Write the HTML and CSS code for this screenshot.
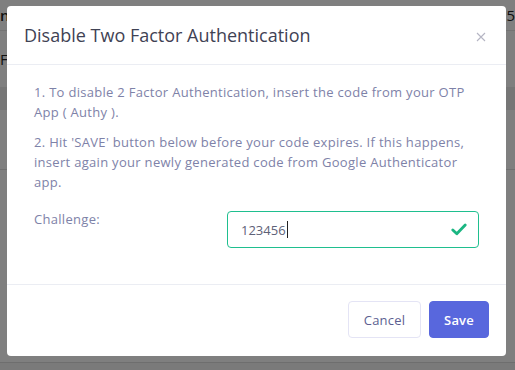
FILE: index.html
```html
<!DOCTYPE html>
<html lang="en">
<head>
<meta charset="utf-8">
<title>Disable Two Factor Authentication</title>
<link rel="stylesheet" href="styles.css">
</head>
<body>
<div class="page">
  <div class="page-top">
    <span class="page-title">nl Authentication</span>
    <span class="page-num">5</span>
  </div>
  <div class="page-row"><span>F.</span></div>
  <div class="page-band"></div>
  <div class="page-table"></div>
  <div class="page-foot"></div>
</div>
<div class="backdrop"></div>
<div class="modal">
  <div class="modal-header">
    <h5 class="modal-title">Disable Two Factor Authentication</h5>
    <button class="close" type="button" aria-label="Close">
      <svg width="10" height="10" viewBox="0 0 10 10"><path d="M1 1 L9 9 M9 1 L1 9" stroke="#b5b5c3" stroke-width="1.1" fill="none"/></svg>
    </button>
  </div>
  <div class="modal-body">
    <p class="note">1. To disable 2 Factor Authentication, insert the code from your OTP App ( Authy ).</p>
    <p class="note">2. Hit 'SAVE' button below before your code expires. If this happens, insert again your newly generated code from Google Authenticator app.</p>
    <div class="field">
      <label class="field-label" for="challenge">Challenge:</label>
      <div class="input-wrap">
        <span class="input-value" id="challenge">123456<span class="caret"></span></span>
        <svg class="check" width="16" height="13" viewBox="0 0 16 13"><path d="M1.8 7 L5.8 10.8 L14.2 2" stroke="#1bb682" stroke-width="2.8" fill="none" stroke-linecap="round" stroke-linejoin="round"/></svg>
      </div>
    </div>
  </div>
  <div class="modal-footer">
    <button class="btn btn-light" type="button">Cancel</button>
    <button class="btn btn-primary" type="button">Save</button>
  </div>
</div>
</body>
</html>
```

FILE: styles.css
```css
* { box-sizing: border-box; }
html, body { margin: 0; padding: 0; }
body {
  width: 515px;
  height: 370px;
  overflow: hidden;
  background: #ffffff;
  font-family: "Open Sans", "Noto Sans", sans-serif;
  position: relative;
}
.page {
  width: 515px;
  height: 370px;
  display: flex;
  flex-direction: column;
}
.page-top {
  height: 31px;
  border-bottom: 1px solid #e6e6e6;
  display: flex;
  justify-content: space-between;
  align-items: center;
  font-size: 15px;
  font-weight: 600;
  color: #222;
}
.page-num { font-weight: 400; }
.page-row {
  height: 56px;
  display: flex;
  align-items: center;
  font-size: 15px;
  color: #222;
}
.page-band {
  height: 23px;
  background: #ececec;
}
.page-table {
  height: 60px;
  border-bottom: 1px solid #e0e0e0;
}
.page-foot {
  margin-top: 192px;
  border-top: 1px solid #dcdcdc;
  flex: 1;
  background: #f5f5f5;
}
.backdrop {
  position: absolute;
  inset: 0;
  background: rgba(0, 0, 0, 0.5);
}
.modal {
  position: absolute;
  left: 7px;
  top: 6px;
  width: 499px;
  height: 350px;
  background: #fff;
  border-radius: 4px;
  display: flex;
  flex-direction: column;
}
.modal-header {
  height: 59px;
  border-bottom: 1px solid #ebedf3;
  display: flex;
  align-items: center;
  justify-content: space-between;
  padding: 0 20px 0 17px;
}
.modal-title {
  margin: 0;
  font-size: 18px;
  font-weight: 500;
  color: #3f4254;
}
.close {
  border: 0;
  background: none;
  padding: 0;
  margin-top: 4px;
  width: 10px;
  height: 10px;
  display: flex;
}
.modal-body {
  padding: 17px 27px 0 27px;
  height: 219px;
}
.note {
  margin: 0 0 10px 0;
  font-size: 13px;
  line-height: 20px;
  letter-spacing: 0.3px;
  color: #7e82a8;
}
.field {
  display: grid;
  grid-template-columns: 193px 1fr;
  margin-top: 19px;
}
.field-label {
  font-size: 13px;
  line-height: 17px;
  letter-spacing: 0.3px;
  color: #7e82a8;
}
.input-wrap {
  height: 37px;
  border: 1px solid #1fbf8f;
  border-radius: 4px;
  display: flex;
  align-items: center;
  justify-content: space-between;
  padding: 0 11px 0 13px;
}
.input-value {
  font-size: 13px;
  color: #5e6278;
  display: flex;
  align-items: center;
}
.caret {
  display: inline-block;
  width: 1px;
  height: 17px;
  background: #222;
  margin-left: 1px;
}
.modal-footer {
  flex: 1;
  border-top: 1px solid #ebedf3;
  display: flex;
  justify-content: flex-end;
  align-items: flex-start;
  gap: 8px;
  padding: 16px 17px 0 0;
}
.btn {
  height: 37px;
  border-radius: 4px;
  font-family: inherit;
  font-size: 13px;
  letter-spacing: 0.2px;
  padding: 0;
  cursor: pointer;
}
.btn-light {
  width: 73px;
  background: #fff;
  border: 1px solid #e4e4f5;
  color: #5c5f91;
}
.btn-primary {
  width: 60px;
  background: #5867dd;
  border: 1px solid #5867dd;
  color: #fff;
  font-weight: 600;
}
```
